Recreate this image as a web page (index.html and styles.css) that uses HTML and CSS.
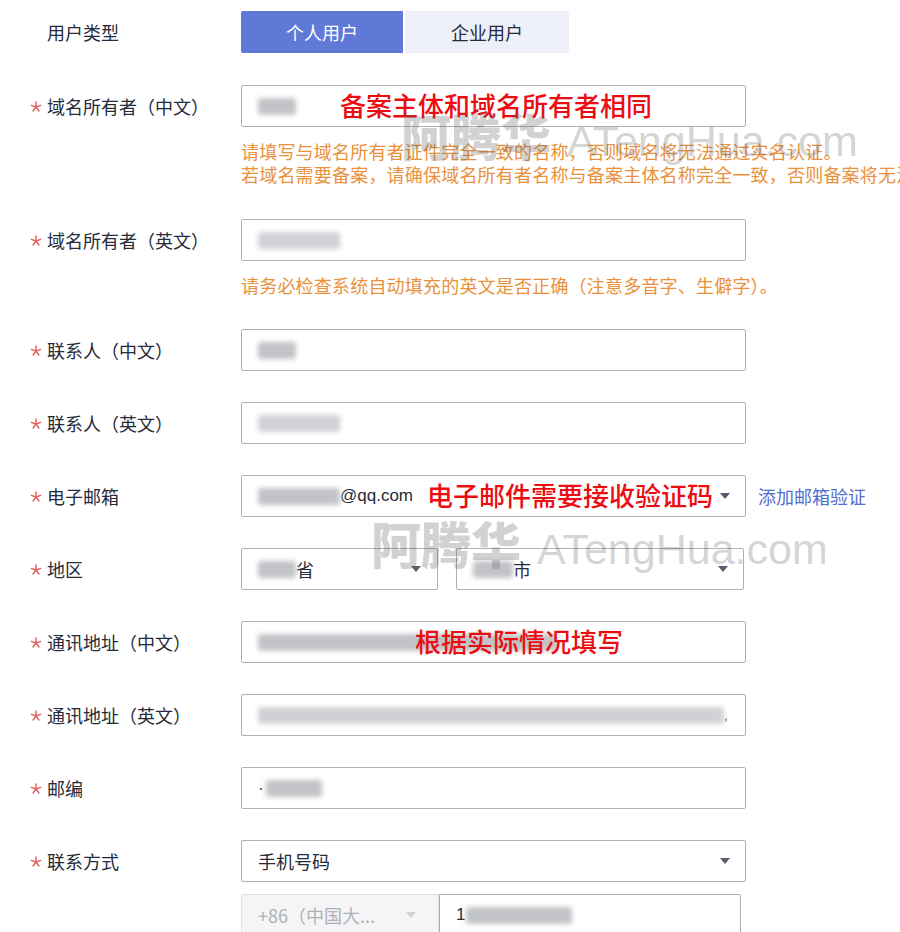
FILE: index.html
```html
<!DOCTYPE html>
<html lang="zh-CN">
<head>
    <meta charset="UTF-8">
    <meta name="viewport" content="width=device-width, initial-scale=1.0">
    <title>域名信息模板</title>
    <link rel="stylesheet" href="styles.css">
</head>
<body>
    <div class="page">
        <form class="form">
            <!-- 用户类型 -->
            <div class="row row-first">
                <div class="label no-star">用户类型</div>
                <div class="control">
                    <div class="toggle">
                        <span class="toggle-item active">个人用户</span>
                        <span class="toggle-item">企业用户</span>
                    </div>
                </div>
            </div>

            <div class="row row-hint">
                <div class="label"><i class="star"></i>域名所有者（中文）</div>
                <div class="control">
                    <div class="input">
                        <span class="blur w38"></span>
                        <span class="note note-owner">备案主体和域名所有者相同</span>
                    </div>
                    <div class="hint">
                        <p>请填写与域名所有者证件完全一致的名称，否则域名将无法通过实名认证。</p>
                        <p>若域名需要备案，请确保域名所有者名称与备案主体名称完全一致，否则备案将无法通过。</p>
                    </div>
                </div>
            </div>

            <div class="row row-hint">
                <div class="label"><i class="star"></i>域名所有者（英文）</div>
                <div class="control">
                    <div class="input"><span class="blur w82 light"></span></div>
                    <div class="hint hint-single">
                        <p>请务必检查系统自动填充的英文是否正确（注意多音字、生僻字）。</p>
                    </div>
                </div>
            </div>

            <div class="row">
                <div class="label"><i class="star"></i>联系人（中文）</div>
                <div class="control">
                    <div class="input"><span class="blur w38"></span></div>
                </div>
            </div>

            <div class="row">
                <div class="label"><i class="star"></i>联系人（英文）</div>
                <div class="control">
                    <div class="input"><span class="blur w82 light"></span></div>
                </div>
            </div>

            <div class="row">
                <div class="label"><i class="star"></i>电子邮箱</div>
                <div class="control control-inline">
                    <div class="input select">
                        <span class="blur w82"></span><span class="latin">@qq.com</span>
                        <span class="note note-email">电子邮件需要接收验证码</span>
                        <span class="arrow"></span>
                    </div>
                    <a class="link" href="#">添加邮箱验证</a>
                </div>
            </div>

            <div class="row">
                <div class="label"><i class="star"></i>地区</div>
                <div class="control control-pair">
                    <div class="input select province">
                        <span class="blur w38"></span>省
                        <span class="arrow"></span>
                    </div>
                    <div class="input select city">
                        <span class="blur w40"></span>市
                        <span class="arrow"></span>
                    </div>
                </div>
            </div>

            <div class="row">
                <div class="label"><i class="star"></i>通讯地址（中文）</div>
                <div class="control">
                    <div class="input">
                        <span class="blur w300"></span>
                        <span class="note note-address">根据实际情况填写</span>
                    </div>
                </div>
            </div>

            <div class="row">
                <div class="label"><i class="star"></i>通讯地址（英文）</div>
                <div class="control">
                    <div class="input"><span class="blur w466 light"></span><span class="tail">,</span></div>
                </div>
            </div>

            <div class="row">
                <div class="label"><i class="star"></i>邮编</div>
                <div class="control">
                    <div class="input"><span class="dot">·</span><span class="blur w56"></span></div>
                </div>
            </div>

            <div class="row">
                <div class="label"><i class="star"></i>联系方式</div>
                <div class="control">
                    <div class="input select">
                        手机号码
                        <span class="arrow"></span>
                    </div>
                    <div class="phone">
                        <div class="input select code">
                            +86（中国大...
                            <span class="arrow arrow-muted"></span>
                        </div>
                        <div class="input number"><span class="latin">1</span><span class="blur w106"></span></div>
                    </div>
                </div>
            </div>
        </form>

        <div class="watermark wm-one"><b>阿腾华</b> ATengHua.com</div>
        <div class="watermark wm-two"><b>阿腾华</b> ATengHua.com</div>
    </div>
</body>
</html>
```

FILE: styles.css
```css
body {
    margin: 0;
    padding: 0;
    background-color: #fff;
    color: #252b3a;
    font-family: "Noto Sans CJK SC", "Liberation Sans", sans-serif;
    font-size: 18px;
    overflow: hidden;
}

.page {
    position: relative;
    width: 900px;
    height: 932px;
    overflow: hidden;
}

.form {
    padding-top: 11px;
}

.row {
    display: grid;
    grid-template-columns: 241px 505px;
    margin-bottom: 31px;
}

.row-first {
    margin-bottom: 32px;
}

.label {
    display: flex;
    align-items: center;
    height: 42px;
    padding-left: 29px;
    white-space: nowrap;
}

.label.no-star {
    padding-left: 47px;
}

.star {
    display: inline-block;
    width: 18px;
    height: 42px;
    background: url("data:image/svg+xml;utf8,<svg xmlns='http://www.w3.org/2000/svg' width='12' height='12' viewBox='0 0 12 12'><g stroke='%23e5625c' stroke-width='1.5' stroke-linecap='round'><line x1='6' y1='1' x2='6' y2='6'/><line x1='6' y1='6' x2='1.3' y2='4.4'/><line x1='6' y1='6' x2='10.7' y2='4.4'/><line x1='6' y1='6' x2='3.1' y2='10'/><line x1='6' y1='6' x2='8.9' y2='10'/></g></svg>") no-repeat 1px 16px;
}

/* toggle */
.toggle {
    display: flex;
    height: 42px;
}

.toggle-item {
    display: flex;
    align-items: center;
    justify-content: center;
    width: 164px;
    background: #eef0f9;
    border-radius: 0 2px 2px 0;
}

.toggle-item.active {
    width: 162px;
    margin-right: 2px;
    background: #6079d7;
    color: #fff;
    border-radius: 2px 0 0 2px;
}

/* inputs */
.input {
    position: relative;
    display: flex;
    align-items: center;
    height: 42px;
    box-sizing: border-box;
    padding: 0 16px;
    background: #fff;
    border: 1px solid #adb0b8;
    border-radius: 2px;
    white-space: nowrap;
}

.blur {
    display: inline-block;
    height: 17px;
    background: #c2c3c7;
    border-radius: 3px;
    filter: blur(2.5px);
}

.blur.light {
    background: #d0d1d5;
}

.w38 { width: 38px; }
.w40 { width: 40px; }
.w56 { width: 56px; }
.w82 { width: 82px; }
.w106 { width: 106px; }
.w300 { width: 300px; }
.w466 { width: 466px; }

.latin {
    font-family: "Liberation Sans", sans-serif;
    font-size: 17px;
}

.tail {
    font-family: "Liberation Sans", sans-serif;
    font-size: 14px;
    color: #555;
}

.dot {
    margin-right: 2px;
    font-family: "Liberation Sans", sans-serif;
    color: #555;
}

.arrow {
    margin-left: auto;
    margin-right: -1px;
    border-left: 5px solid transparent;
    border-right: 5px solid transparent;
    border-top: 6px solid #575d6c;
}

.arrow-muted {
    border-top-color: #cfd1d6;
}

.note {
    position: absolute;
    top: 50%;
    transform: translateY(-52%);
    color: #ec0c12;
    font-size: 26px;
    font-weight: 500;
    line-height: 1;
}

.note-owner { left: 98px; }
.note-email { left: 185px; }
.note-address { left: 173px; }

.hint {
    margin: 13px 0 2px;
    color: #e9913c;
    font-size: 18px;
    letter-spacing: 0.2px;
    line-height: 23px;
    white-space: nowrap;
}

.hint-single {
    margin-bottom: 1px;
}

.hint p {
    margin: 0;
}

/* email + link */
.control-inline {
    display: flex;
    align-items: center;
}

.control-inline .input {
    width: 505px;
    flex-shrink: 0;
}

.link {
    margin-left: 12px;
    color: #526ecc;
    text-decoration: none;
    white-space: nowrap;
}

/* province / city */
.control-pair {
    display: flex;
    gap: 18px;
}

.province {
    width: 197px;
}

.city {
    width: 288px;
}

.province .arrow {
    margin-right: 0;
}

/* phone */
.phone {
    display: flex;
    margin-top: 12px;
}

.code {
    width: 198px;
    background: #f5f5f6;
    border-color: #dfe1e6;
    color: #adb0b8;
    border-radius: 2px 0 0 2px;
}

.code .arrow {
    margin-right: 6px;
}

.number {
    width: 302px;
    border-left: 1px solid #adb0b8;
    border-radius: 0 2px 2px 0;
}

.number .latin {
    margin-right: 1px;
}

/* watermark */
.watermark {
    position: absolute;
    color: rgba(90, 90, 90, 0.27);
    font-family: "Liberation Sans", sans-serif;
    font-size: 43px;
    line-height: 56px;
    white-space: nowrap;
    pointer-events: none;
}

.watermark b {
    font-family: "Noto Sans CJK SC", sans-serif;
    font-size: 50px;
    font-weight: 900;
    margin-right: 4px;
}

.wm-one {
    left: 401px;
    top: 106px;
}

.wm-two {
    left: 371px;
    top: 514px;
}
```
